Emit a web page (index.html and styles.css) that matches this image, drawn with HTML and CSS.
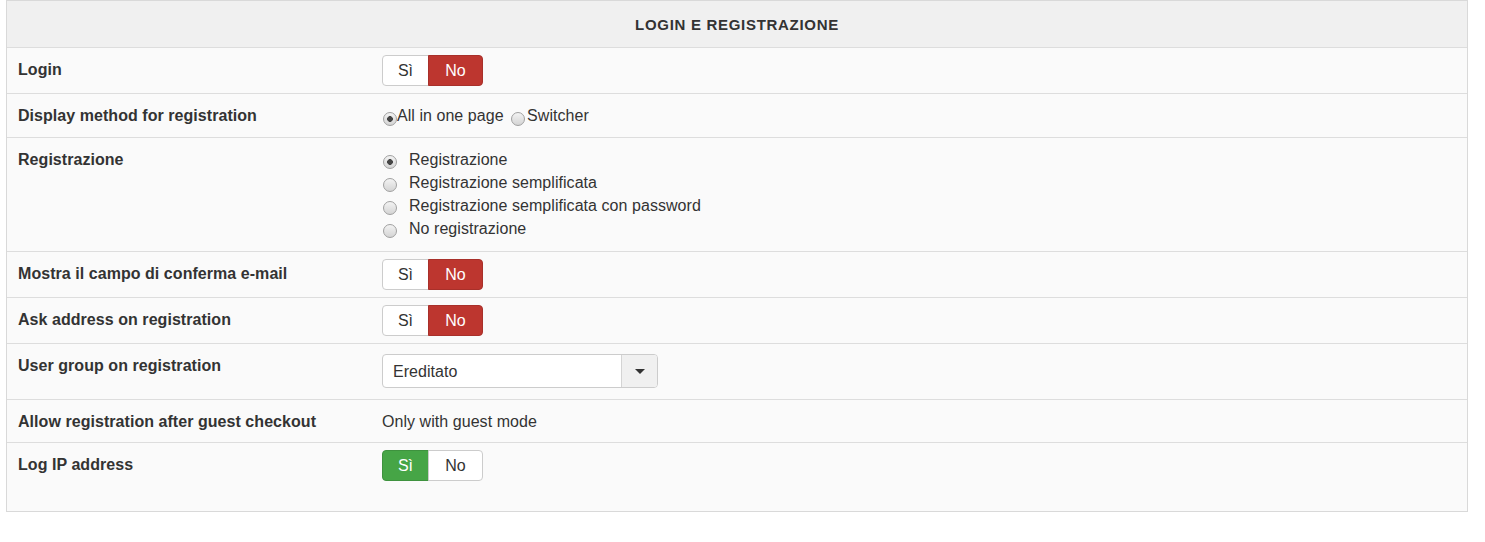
FILE: index.html
```html
<!DOCTYPE html>
<html lang="it">
<head>
<meta charset="utf-8">
<title>Login e registrazione</title>
<link rel="stylesheet" href="styles.css">
</head>
<body>
<div class="panel">
  <div class="panel-head">LOGIN E REGISTRAZIONE</div>

  <div class="row">
    <div class="label">Login</div>
    <div class="control">
      <div class="toggle"><span class="btn btn-yes">Sì</span><span class="btn btn-no active-no">No</span></div>
    </div>
  </div>

  <div class="row">
    <div class="label">Display method for registration</div>
    <div class="control">
      <div class="radios-inline">
        <span class="radio checked"></span><span class="opt">All in one page</span>
        <span class="radio second"></span><span class="opt">Switcher</span>
      </div>
    </div>
  </div>

  <div class="row">
    <div class="label">Registrazione</div>
    <div class="control">
      <ul class="radio-list">
        <li><span class="radio checked"></span><span class="opt">Registrazione</span></li>
        <li><span class="radio"></span><span class="opt">Registrazione semplificata</span></li>
        <li><span class="radio"></span><span class="opt">Registrazione semplificata con password</span></li>
        <li><span class="radio"></span><span class="opt">No registrazione</span></li>
      </ul>
    </div>
  </div>

  <div class="row">
    <div class="label">Mostra il campo di conferma e-mail</div>
    <div class="control">
      <div class="toggle"><span class="btn btn-yes">Sì</span><span class="btn btn-no active-no">No</span></div>
    </div>
  </div>

  <div class="row">
    <div class="label">Ask address on registration</div>
    <div class="control">
      <div class="toggle"><span class="btn btn-yes">Sì</span><span class="btn btn-no active-no">No</span></div>
    </div>
  </div>

  <div class="row">
    <div class="label">User group on registration</div>
    <div class="control">
      <div class="select">
        <span class="select-value">Ereditato</span>
        <span class="select-arrow"><span class="caret"></span></span>
      </div>
    </div>
  </div>

  <div class="row">
    <div class="label">Allow registration after guest checkout</div>
    <div class="control">
      <div class="text-value">Only with guest mode</div>
    </div>
  </div>

  <div class="row last">
    <div class="label">Log IP address</div>
    <div class="control">
      <div class="toggle"><span class="btn btn-yes active-yes">Sì</span><span class="btn btn-no">No</span></div>
    </div>
  </div>
</div>
</body>
</html>
```

FILE: styles.css
```css
* { box-sizing: border-box; }

html, body {
  margin: 0;
  padding: 0;
  background: #ffffff;
}

body {
  font-family: "Liberation Sans", Arial, sans-serif;
  font-size: 16px;
  letter-spacing: 0.05px;
  color: #333333;
}

.panel {
  width: 1462px;
  margin: 0 0 0 6px;
  border: 1px solid #d9d9d9;
  background: #fafafa;
}

.panel-head {
  height: 46px;
  line-height: 47px;
  background: #f0f0f0;
  text-align: center;
  font-weight: bold;
  font-size: 15px;
  letter-spacing: 0.7px;
  color: #333333;
}

.row {
  display: flex;
  align-items: flex-start;
  border-top: 1px solid #dddddd;
  padding: 7px 11px;
  background: #fafafa;
}

.row.last {
  padding-bottom: 30px;
}

.label {
  width: 364px;
  flex: none;
  font-weight: bold;
  padding: 6px 0 4px;
  line-height: 18px;
}

.control {
  flex: 1;
}

/* toggle buttons */
.toggle {
  display: inline-flex;
}

.btn {
  display: flex;
  align-items: center;
  justify-content: center;
  height: 31px;
  padding-top: 1px;
  border: 1px solid #cccccc;
  background: #ffffff;
  color: #333333;
  font-size: 16px;
}

.btn-yes {
  width: 47px;
  border-radius: 4px 0 0 4px;
}

.btn-no {
  width: 55px;
  margin-left: -1px;
  border-radius: 0 4px 4px 0;
}

.active-no {
  background: #bd362f;
  border-color: #a8302a;
  color: #ffffff;
}

.active-yes {
  background: #46a546;
  border-color: #3e923e;
  color: #ffffff;
}

/* radios */
.radio {
  display: inline-block;
  width: 14px;
  height: 14px;
  border-radius: 50%;
  border: 1px solid #a0a0a0;
  background: linear-gradient(#f3f3f3, #d4d4d4);
  vertical-align: middle;
  position: relative;
}

.radio.checked {
  background: radial-gradient(circle, #454545 0, #454545 2.6px, transparent 3.1px), linear-gradient(#f3f3f3, #d4d4d4);
}

.radios-inline {
  padding: 6px 0 5px 1px;
  line-height: 18px;
  white-space: nowrap;
}

.radios-inline .radio {
  top: 2px;
}

.radios-inline .radio.second {
  margin-left: 3px;
  margin-right: 2px;
}

.radio-list {
  list-style: none;
  margin: 0;
  padding: 3px 0 4px 1px;
}

.radio-list li {
  height: 23px;
  display: flex;
  align-items: center;
}

.radio-list .radio {
  top: 2px;
  margin-right: 12px;
}

/* select */
.select {
  display: flex;
  width: 276px;
  height: 34px;
  margin: 3px 0 4px;
  border: 1px solid #cccccc;
  border-radius: 4px;
  background: #ffffff;
  overflow: hidden;
}

.select-value {
  flex: 1;
  padding-left: 10px;
  line-height: 33px;
}

.select-arrow {
  width: 36px;
  border-left: 1px solid #d4d4d4;
  background: #f0f0f0;
  display: flex;
  align-items: center;
  justify-content: center;
}

.caret {
  width: 0;
  height: 0;
  border-left: 5px solid transparent;
  border-right: 5px solid transparent;
  border-top: 5px solid #333333;
}

.text-value {
  padding: 6px 0 4px;
  line-height: 18px;
}
```
